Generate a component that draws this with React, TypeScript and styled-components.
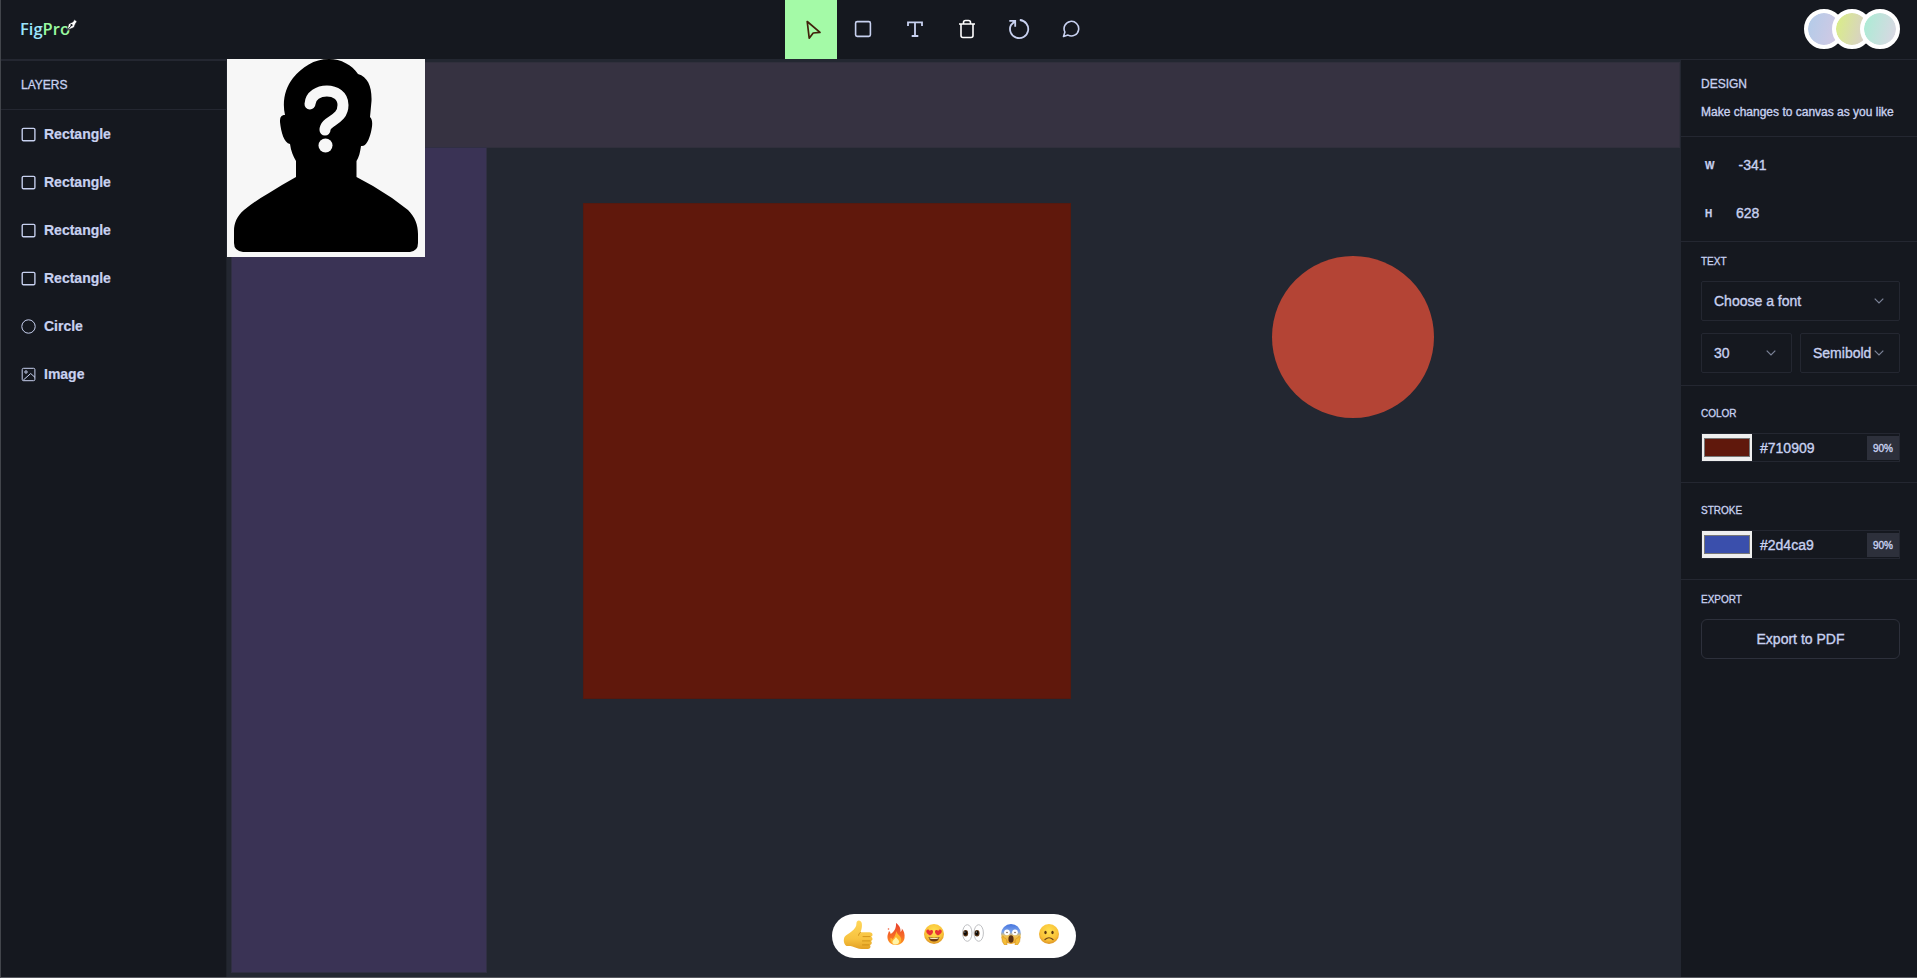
import React from "react";
import styled, { createGlobalStyle } from "styled-components";

const line = "#242731";
const ink = "#c8d1f0";
const panel = "#15181f";

const Global = createGlobalStyle`
  *, *::after { box-sizing: border-box; }
  html, body { margin: 0; background: ${panel}; overflow: hidden; }
  body { font-family: "Liberation Sans", Arial, sans-serif; color: ${ink}; }
`;

const Page = styled.main`
  width: 100vw;
  height: 100vh;
  display: flex;
  flex-direction: column;
  border-left: 1px solid #42454b;
  border-bottom: 1px solid #55575e;
  background: ${panel};
`;

const Header = styled.header`
  height: 59px;
  flex: none;
  display: grid;
  grid-template-columns: 784px 1fr auto;
  align-items: center;
  padding-right: 17px;
`;

const Logo = styled.svg`
  display: block;
  margin: 0 0 0 19px;
`;

const Tools = styled.nav`
  display: flex;
  height: 59px;
`;

const Tool = styled.button<{ $active?: boolean }>`
  width: 52px;
  height: 59px;
  padding: 0 0 1px;
  border: 0;
  display: flex;
  align-items: center;
  justify-content: center;
  background: ${(p) => (p.$active ? "#a4faa7" : "transparent")};
  color: ${(p) => (p.$active ? "#42210b" : ink)};
`;

const Avatars = styled.div`
  display: flex;
  padding-bottom: 1px;
`;

const Avatar = styled.span<{ $from: string; $to: string }>`
  width: 40px;
  height: 40px;
  margin-left: -12px;
  border-radius: 50%;
  border: 4px solid #fff;
  background: linear-gradient(105deg, ${(p) => p.$from}, ${(p) => p.$to}) padding-box, #fff;
`;

const Body = styled.div`
  flex: 1;
  min-height: 0;
  display: grid;
  grid-template-columns: 226px 1fr 236px;
`;

const Layers = styled.aside`
  border-top: 2px solid ${line};
  border-right: 1px solid #1e222a;
  background: ${panel};
`;

const LayersTitle = styled.h2`
  margin: 0;
  height: 49px;
  padding: 0 20px 1px;
  display: flex;
  align-items: center;
  border-bottom: 1px solid ${line};
  font-size: 12px;
  font-weight: 400;
  -webkit-text-stroke: 0.3px ${ink};
`;

const Layer = styled.div`
  height: 48px;
  padding-left: 19.5px;
  display: flex;
  align-items: center;
  gap: 8.5px;
  font-size: 14px;
  font-weight: 700;
  -webkit-text-stroke: 0.2px ${ink};
`;

const Canvas = styled.section`
  position: relative;
  overflow: hidden;
  background: #232731;
`;

const Shape = styled.div<{ $x: number; $y: number; $w: number; $h: number; $fill: string; $edge?: string; $round?: boolean }>`
  position: absolute;
  left: ${(p) => p.$x}px;
  top: ${(p) => p.$y}px;
  width: ${(p) => p.$w}px;
  height: ${(p) => p.$h}px;
  background: ${(p) => p.$fill};
  border: ${(p) => (p.$edge ? `1px solid ${p.$edge}` : "0")};
  border-radius: ${(p) => (p.$round ? "50%" : "0")};
`;

const Picture = styled.svg`
  position: absolute;
  left: 0;
  top: 0;
`;

const Reactions = styled.div`
  position: absolute;
  left: 605px;
  bottom: 19px;
  width: 244px;
  height: 44px;
  border-radius: 22px;
  background: #fff;
  display: grid;
  grid-template-columns: repeat(6, 38.2px);
  align-items: center;
  justify-items: center;
  padding: 0 0 4px 7px;
`;

const Design = styled.aside`
  border-top: 1px solid ${line};
  background: ${panel};
`;

const Section = styled.section<{ $h?: number; $top: number }>`
  height: ${(p) => (p.$h ? `${p.$h}px` : "auto")};
  padding: ${(p) => p.$top}px 17px 0 20px;
  border-bottom: ${(p) => (p.$h ? `1px solid ${line}` : "0")};
`;

const Title = styled.h2`
  margin: 0;
  font-size: 12px;
  line-height: 16px;
  font-weight: 400;
  -webkit-text-stroke: 0.3px ${ink};
`;

const Hint = styled.p`
  margin: 12px 0 0;
  font-size: 12px;
  line-height: 16px;
  white-space: nowrap;
  -webkit-text-stroke: 0.35px ${ink};
`;

const Label = styled.h3`
  margin: 0;
  font-size: 10px;
  line-height: 15px;
  font-weight: 400;
  -webkit-text-stroke: 0.3px ${ink};
`;

const Dimension = styled.div`
  height: 48px;
  padding-left: 4px;
  display: flex;
  align-items: center;
  font-size: 14px;
  -webkit-text-stroke: 0.35px ${ink};
`;

const DimensionName = styled.b<{ $w: number }>`
  width: ${(p) => p.$w}px;
  font-size: 10px;
  -webkit-text-stroke: 0.25px ${ink};
`;

const Row = styled.div`
  display: grid;
  grid-template-columns: 91px 100px;
  gap: 8px;
  margin-top: 12px;
`;

const Select = styled.div<{ $top?: number }>`
  height: 40px;
  margin-top: ${(p) => p.$top ?? 0}px;
  padding: 0 15px 0 12px;
  border: 1px solid ${line};
  border-radius: 2px;
  display: flex;
  align-items: center;
  justify-content: space-between;
  font-size: 14px;
  -webkit-text-stroke: 0.35px ${ink};
`;

const ColorField = styled.div`
  height: 29px;
  margin-top: 12px;
  border: 1px solid ${line};
  display: flex;
  align-items: center;
  font-size: 14px;
  -webkit-text-stroke: 0.35px ${ink};
`;

const Swatch = styled.span<{ $color: string }>`
  width: 50px;
  height: 27px;
  margin-right: 8px;
  padding: 4px 2px;
  background: #efefef;
  &::after {
    content: "";
    display: block;
    height: 19px;
    border: 1px solid #777;
    background: ${(p) => p.$color};
  }
`;

const Opacity = styled.span`
  width: 32px;
  height: 24px;
  margin: 1px 0 0 auto;
  background: #2d303b;
  display: flex;
  align-items: center;
  justify-content: center;
  font-size: 10px;
`;

const ExportButton = styled.button`
  width: 100%;
  height: 40px;
  margin-top: 12px;
  display: block;
  border: 1px solid #2d303b;
  border-radius: 6px;
  background: transparent;
  color: ${ink};
  font: 14px "Liberation Sans", Arial, sans-serif;
  -webkit-text-stroke: 0.35px ${ink};
`;

const Chevron = () => (
  <svg width="10" height="6" viewBox="0 0 10 6" fill="none" stroke="#7c8397" strokeWidth="1.2">
    <path d="M.7 .7 5 5 9.3 .7" />
  </svg>
);

const LayerIcon = ({ kind }: { kind: string }) => (
  <svg width="15" height="15" viewBox="0 0 15 15" fill="none" stroke={ink} strokeWidth={kind === "Rectangle" ? 1.35 : 1}>
    {kind === "Circle" ? <circle cx="7.5" cy="7.5" r="6.7" /> : <rect x="1.200" y="1.3" width="12.700" height="12.4" rx="1.3" />}
    {kind === "Image" && (
      <>
        <circle cx="5" cy="5" r="1.2" />
        <path d="M2.2 13.2 9.7 6.5 14 10.4" />
      </>
    )}
  </svg>
);

const Thumb = () => (
  <svg width="30" height="31" viewBox="0 0 30 31">
    <defs>
      <linearGradient id="skin" x1="0" y1="0" x2="0" y2="1">
        <stop offset="0" stopColor="#ffd75a" />
        <stop offset=".65" stopColor="#f7c23f" />
        <stop offset="1" stopColor="#e3a024" />
      </linearGradient>
    </defs>
    <path d="M1.500 18C3 15.500 6 15 8.500 12.500 11.500 10 13.500 8 13.500 4c0-3.500 4.500-3.500 5.200 0 .7 3.500-.2 6.500-1.200 9.300h9c3.800 0 3.800 4 1.200 4.500 2.500.5 2.200 3.900 0 4.200 1.800.8 1.300 3.800-.8 4 1.300 1.200.4 3.900-2 3.900-5 .3-9.900.1-13.400-1.700-3-1.500-5-1-8-1.200C.5 25 .2 21 1.500 18Z" fill="url(#skin)" />
    <path d="M20 17.600h7M19.500 21.900h7.500M19.500 25.900h6.500M17.500 13.300q-2 1-2 3" fill="none" stroke="#c98912" strokeWidth=".8" strokeLinecap="round" />
  </svg>
);

const Fire = () => (
  <svg width="20" height="24" viewBox="0 0 20 24">
    <defs>
      <linearGradient id="flame" x1="0" y1="0" x2="0" y2="1">
        <stop offset="0" stopColor="#e9402b" />
        <stop offset=".6" stopColor="#f66b27" />
        <stop offset="1" stopColor="#ff9b20" />
      </linearGradient>
    </defs>
    <path d="M10 1c3 2 5 5 4.500 9 1.200-.7 1.500-2 1.300-3.500C18 9 19 12 18.500 16 18 20 14.500 23 10 23c-5 0-8-3-8.500-7C1 13 2.500 11 3 9c1.200 1 1.700 2 1.500 3C8 10 10.500 6 10 1Z" fill="url(#flame)" />
    <path d="M10.500 9c.2 3 3 4 4 6 2 4-.5 7.500-4.500 7.500S4 20 4.500 16c1 0 1.500.5 2 1.500 2-2 3-5 4-8.500Z" fill="#ffb52e" />
    <path d="M10 15c1 2 3.500 3 3 5-.3 1.500-1.500 2.500-3.300 2.500-3 0-4-2-2.700-4 1-1 2-2 3-3.500Z" fill="#fff4a8" />
    <circle cx="2.500" cy="7" r=".8" fill="#ef5a35" />
  </svg>
);

const Face = ({ kind }: { kind: "love" | "scream" | "sad" }) => (
  <svg width="20" height="22" viewBox="0 0 20 22">
    <defs>
      <radialGradient id={`face-${kind}`} cx=".5" cy=".35" r=".7">
        <stop offset="0" stopColor="#ffe04f" />
        <stop offset=".65" stopColor="#f9c137" />
        <stop offset="1" stopColor="#d4861f" />
      </radialGradient>
      <linearGradient id="cold" x1="0" y1="0" x2="0" y2="1">
        <stop offset="0" stopColor="#4474df" />
        <stop offset=".4" stopColor="#7fa5ea" />
        <stop offset=".6" stopColor="#f1c65a" />
        <stop offset="1" stopColor="#e9a126" />
      </linearGradient>
    </defs>
    <circle cx="10" cy="11" r="10" fill={kind === "scream" ? "url(#cold)" : `url(#face-${kind})`} />
    {kind === "love" && (
      <>
        <path d="M6 12.500C3 11 1.500 9 2.500 7.300 3.500 6 5.200 6.500 5.700 8c1-1.500 3-1.300 3.300.2.300 1.800-1.200 3.300-3 4.300ZM14 12.500c3-1.500 4.500-3.500 3.500-5.200-1-1.300-2.700-.8-3.200.7-1-1.500-3-1.300-3.300.2-.3 1.800 1.200 3.300 3 4.300Z" fill="#e63235" />
        <path d="M4.500 14q5.500 1.500 11 0c-.5 3-2.500 4.600-5.500 4.600S5 17 4.500 14Z" fill="#6d3a12" />
        <path d="M5.500 14.600q4.500 1 9 0v.8q-4.500 1-9 0Z" fill="#f6e7c4" />
      </>
    )}
    {kind === "scream" && (
      <>
        <circle cx="6" cy="9.300" r="2.900" fill="#fff" />
        <circle cx="14" cy="9.300" r="2.900" fill="#fff" />
        <circle cx="6" cy="9.500" r=".7" fill="#553218" />
        <circle cx="14" cy="9.500" r=".7" fill="#553218" />
        <ellipse cx="10" cy="16" rx="2.600" ry="3.800" fill="#593013" />
        <path d="M.8 14c1-2 2-.8 2 1 1.500-.5 3 1 3 3.500L6 22H3.500Q.5 19 .8 14ZM19.200 14c-1-2-2-.8-2 1-1.500-.5-3 1-3 3.500L14 22h2.500q3-3 2.700-8Z" fill="#f5bd37" stroke="#c98a20" strokeWidth=".5" />
      </>
    )}
    {kind === "sad" && (
      <>
        <ellipse cx="6.500" cy="9.500" rx="1.200" ry="1.700" fill="#5a3612" />
        <ellipse cx="13.500" cy="9.500" rx="1.200" ry="1.700" fill="#5a3612" />
        <path d="M6 16.500q4-3.500 8 0" fill="none" stroke="#6b4216" strokeWidth="1.200" strokeLinecap="round" />
      </>
    )}
  </svg>
);

const Eyes = () => (
  <svg width="22" height="20" viewBox="0 0 22 20">
    {[5.3, 16.7].map((x) => (
      <g key={x}>
        <ellipse cx={x} cy="9" rx="4.700" ry="8.300" fill="#fff" stroke="#bfc0c3" />
        <ellipse cx={x - 1.7} cy="9.200" rx="2.500" ry="3.300" fill="#5a3515" />
        <ellipse cx={x - 1.9} cy="9" rx="1.600" ry="2.300" fill="#090807" />
        <circle cx={x - 2.4} cy="8" r=".5" fill="#fff" />
      </g>
    ))}
  </svg>
);

const Silhouette = () => (
  <Picture width="198" height="198" viewBox="0 0 198 198">
    <rect width="198" height="198" fill="#f7f7f7" />
    <path d="M102 0C114 0 125 6 131 15 141 18 145 28 144.500 42L143 58C146 61 145.500 66 144 73 142 81 139 88 134 87 133 94 132 98 129.500 102V118L146 127 165 139 181 151C188 158 191 166 191 175V184Q191 192 183 193H16Q7 192 7 184V172C7 164 10 157 17 151Q28 142 42 134L55 126 69 118V102C66 97 64 92 63 85 57 84 54 73 53 63 53 58 54 56 58 56 55 43 58 29 66 19 75 8 87 0 102 0Z" fill="#000" />
    <path d="M83 45C84 28 116 27 116 46 116 62 98 61 98 71" fill="none" stroke="#f7f7f7" strokeWidth="11" strokeLinecap="round" />
    <circle cx="98.500" cy="86.500" r="7" fill="#f7f7f7" />
  </Picture>
);

const layerNames = ["Rectangle", "Rectangle", "Rectangle", "Rectangle", "Circle", "Image"];

export default function App() {
  return (
    <>
      <Global />
      <Page>
        <Header>
          <Logo width="60" height="29" viewBox="0 0 60 29">
            <text x="0" y="19.700" fontFamily="Open Sans, Noto Sans, sans-serif" fontSize="16.500" fontWeight="600" textLength="50" lengthAdjust="spacingAndGlyphs">
              <tspan fill="#9be4fb">Fig</tspan>
              <tspan fill="#9af99f">Pro</tspan>
            </text>
            <path d="M47 15.500 48.600 9 53 6.800 54.600 4.500 57 6.500 55.500 8.700 54 12.500Z" fill="#fff" stroke={panel} strokeWidth=".7" />
            <path d="m47.500 15 3.300-3.800" stroke={panel} />
            <circle cx="51.500" cy="10.200" r="1.100" fill={panel} />
          </Logo>
          <Tools>
            <Tool $active aria-label="Select">
              <svg width="22" height="22" viewBox="0 0 22 22" fill="none" stroke="currentColor" strokeWidth="1.700" strokeLinejoin="round">
                <path d="M7.200 3.500 20 14.400 13.200 15 9.200 20.200Z" />
              </svg>
            </Tool>
            <Tool aria-label="Rectangle">
              <svg width="18" height="18" viewBox="0 0 18 18" fill="none" stroke="currentColor" strokeWidth="1.600">
                <rect x="1.600" y="1.600" width="14.800" height="14.800" rx="1.600" />
              </svg>
            </Tool>
            <Tool aria-label="Text">
              <svg width="18" height="18" viewBox="0 0 18 18" fill="none" stroke="currentColor" strokeWidth="1.800">
                <path d="M2 6V2.300H16V6M9 2.300V16M5.700 16H12.300" />
              </svg>
            </Tool>
            <Tool aria-label="Delete">
              <svg width="18" height="20" viewBox="0 0 18 20" fill="none" stroke="#fff" strokeWidth="1.600">
                <path d="M1 5H17M3 5V16.500Q3 18.500 5 18.500H13Q15 18.500 15 16.500V5M5.500 5V3.500Q5.500 1.500 7.500 1.500H10.500Q12.500 1.500 12.500 3.500V5" />
              </svg>
            </Tool>
            <Tool aria-label="Reset">
              <svg width="22" height="22" viewBox="0 0 22 22" fill="none" stroke="currentColor" strokeWidth="1.800">
                <path d="M11.800 2A9.100 9.100 0 1 1 3 7L7 3M1.300 2.800H7.200V8.800" />
              </svg>
            </Tool>
            <Tool aria-label="Comment">
              <svg width="18" height="18" viewBox="0 0 18 18" fill="none" stroke="currentColor" strokeWidth="1.600" strokeLinejoin="round">
                <path d="M1.500 16.500 2.900 12A7.300 7.300 0 1 1 6 15.100Z" />
              </svg>
            </Tool>
          </Tools>
          <Avatars>
            <Avatar $from="#b2cce9" $to="#d5c8e3" />
            <Avatar $from="#d9ef83" $to="#d8cbd3" />
            <Avatar $from="#a9edd4" $to="#ddd6e4" />
          </Avatars>
        </Header>
        <Body>
          <Layers>
            <LayersTitle>LAYERS</LayersTitle>
            {layerNames.map((name, i) => (
              <Layer key={i}>
                <LayerIcon kind={name} />
                {name}
              </Layer>
            ))}
          </Layers>
          <Canvas>
            <Shape $x={4} $y={3} $w={1449} $h={86} $fill="#363241" $edge="#302f3c" />
            <Shape $x={4} $y={88} $w={256} $h={826} $fill="#3a3355" $edge="#302f43" />
            <Shape $x={356} $y={144} $w={488} $h={496} $fill="#60180c" $edge="#54190f" />
            <Shape $x={1044.5} $y={197.3} $w={162} $h={162} $fill="#b44435" $round />
            <Silhouette />
            <Reactions>
              <Thumb />
              <Fire />
              <Face kind="love" />
              <Eyes />
              <Face kind="scream" />
              <Face kind="sad" />
            </Reactions>
          </Canvas>
          <Design>
            <Section $h={77} $top={16}>
              <Title>DESIGN</Title>
              <Hint>Make changes to canvas as you like</Hint>
            </Section>
            <Section $h={105} $top={4}>
              <Dimension><DimensionName $w={33.5}>W</DimensionName>-341</Dimension>
              <Dimension><DimensionName $w={31}>H</DimensionName>628</Dimension>
            </Section>
            <Section $h={144} $top={12}>
              <Label>TEXT</Label>
              <Select $top={12}>Choose a font<Chevron /></Select>
              <Row>
                <Select>30<Chevron /></Select>
                <Select>Semibold<Chevron /></Select>
              </Row>
            </Section>
            <Section $h={97} $top={20}>
              <Label>COLOR</Label>
              <ColorField><Swatch $color="#60180c" />#710909<Opacity>90%</Opacity></ColorField>
            </Section>
            <Section $h={97} $top={20}>
              <Label>STROKE</Label>
              <ColorField><Swatch $color="#3a4fac" />#2d4ca9<Opacity>90%</Opacity></ColorField>
            </Section>
            <Section $top={12}>
              <Label>EXPORT</Label>
              <ExportButton>Export to PDF</ExportButton>
            </Section>
          </Design>
        </Body>
      </Page>
    </>
  );
}
